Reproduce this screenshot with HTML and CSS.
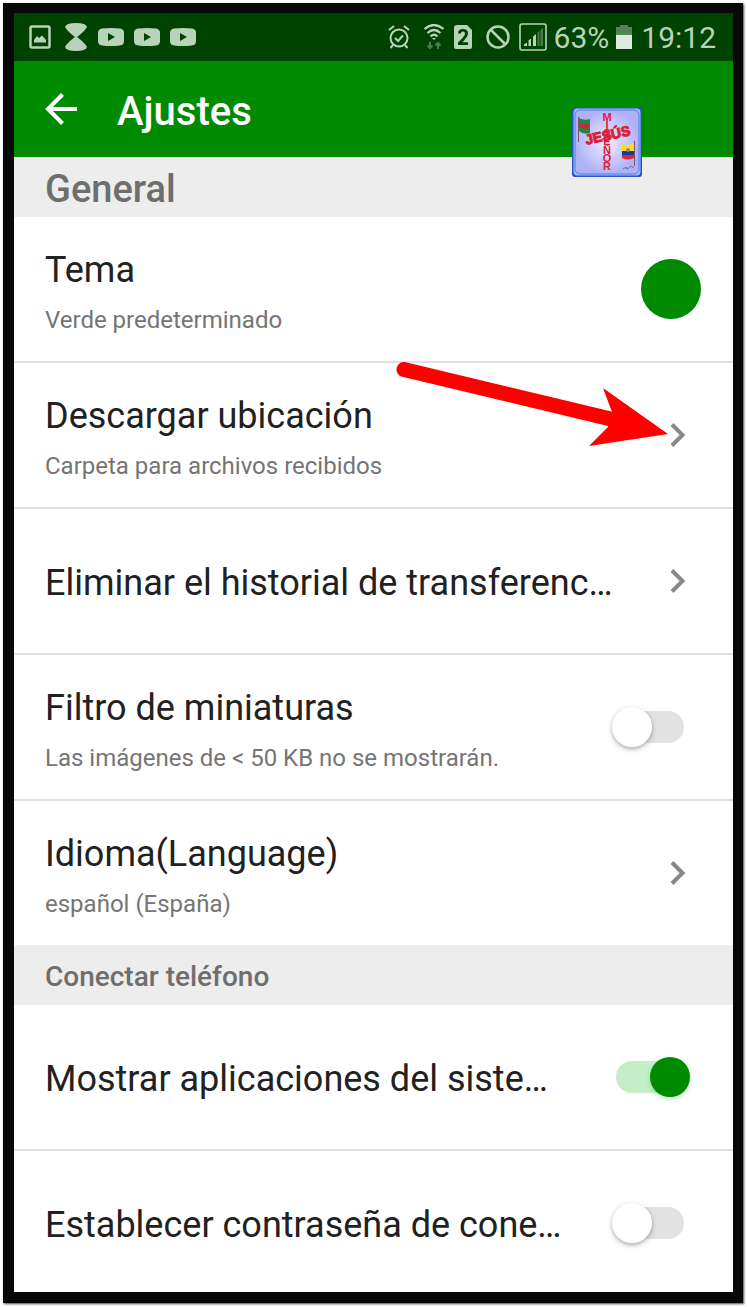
FILE: index.html
```html
<!DOCTYPE html>
<html lang="es">
<head>
<meta charset="utf-8">
<meta name="viewport" content="width=device-width, initial-scale=1">
<title>Ajustes</title>
<link rel="stylesheet" href="styles.css">
</head>
<body>
<svg class="defs" width="0" height="0" aria-hidden="true">
  <symbol id="video" viewBox="0 0 26 18">
    <path fill-rule="evenodd" d="M4 .5Q13-.5 22 .5Q26 1 26 5V13Q26 17 22 17.500Q13 18.500 4 17.500Q0 17 0 13V5Q0 1 4 .5ZM10 5V13L17 9Z"/>
  </symbol>
  <symbol id="chevron" viewBox="0 0 16 24">
    <path d="M2 1.500L12.500 12L2 22.500" fill="none" stroke="#888" stroke-width="4"/>
  </symbol>
</svg>
<div class="phone">
  <div class="status">
    <div class="notices">
      <svg width="22" height="24" viewBox="0 0 22 24"><rect x="1.500" y="1.500" width="19" height="21" rx="1.500" fill="none" stroke="currentColor" stroke-width="2.500"/><path d="M5 17.500V15L8 11L10 13L13 10.500L17 15V17.500Z"/></svg>
      <svg width="22" height="28" viewBox="0 0 22 28"><path d="M0 4Q1 0 11 0T22 4Q19 9 12 14Q19 19 22 24Q21 28 11 28T0 24Q3 19 10 14Q3 9 0 4Z"/></svg>
      <svg width="26" height="18"><use href="#video"/></svg>
      <svg width="26" height="18"><use href="#video"/></svg>
      <svg width="26" height="18"><use href="#video"/></svg>
    </div>
    <div class="system">
      <svg class="alarm" width="22" height="24" viewBox="0 0 22 24" fill="none" stroke="currentColor" stroke-width="2"><circle cx="11" cy="13" r="8.500"/><path d="M1 5L6 1M21 5L16 1M5 20L2.500 23M17 20L19.500 23M7 13L10 16L15 10.500"/></svg>
      <svg class="wifi" width="20" height="26" viewBox="0 0 20 26" fill="none" stroke="currentColor" stroke-width="2.200"><path d="M.5 5Q10-3 19.500 5M3.500 9Q10 3 16.500 9M6.500 12.500Q10 9 13.500 12.500"/><path d="M8 14L10 16L12 14Z" fill="currentColor" stroke="none"/><path d="M6 18V24M3.500 21.500L6 24L8.500 21.500M14 25V19M11.500 21.500L14 19L16.500 21.500" opacity=".4" stroke-width="2"/></svg>
      <svg class="sim" width="18" height="24" viewBox="0 0 18 24"><path fill-rule="evenodd" d="M3 0H13L18 5V22Q18 24 16 24H2Q0 24 0 22V3Q0 0 3 0ZM4 8.500H7Q7 6.500 9 6.500T11 8.500Q11 10 8 13.500L4 17.500V20H14V17.300H8.500L10.500 15Q14 11 14 8.500Q14 4 9 4T4 8.500Z"/></svg>
      <svg class="block" width="24" height="24" viewBox="0 0 24 24" fill="none" stroke="currentColor" stroke-width="2.500"><circle cx="12" cy="12" r="10.500"/><path d="M4.500 4.500L19.500 19.500"/></svg>
      <svg class="signal" width="28" height="28" viewBox="0 0 28 28"><rect x="1" y="1" width="26" height="26" rx="2" fill="none" stroke="currentColor" stroke-width="1.600"/><path d="M5 23V21.500L8 19.500V23ZM9.500 23V17.500L12 15.500V23ZM14 23V13.500L17 11V23Z"/><path d="M18.500 23V9.500L20.500 8V23ZM21.500 23V7L24 5V23Z" opacity=".4"/></svg>
      <span>63%</span>
      <svg class="battery" width="16" height="24" viewBox="0 0 16 24"><path d="M0 10V2H4V0H12V2H16V10Z" opacity=".45"/><path d="M0 10H16V24H0Z" fill="#dce9dc"/></svg>
      <span>19:12</span>
    </div>
  </div>
  <header class="bar">
    <button class="back" type="button" aria-label="Atrás"><svg width="32" height="32" viewBox="0 0 32 32" fill="none" stroke="#fff" stroke-width="4"><path d="M32 16H3M17.500 1.500L3 16L17.500 30.500"/></svg></button>
    <h1>Ajustes</h1>
    <svg class="logo" width="70" height="70" viewBox="0 0 70 70">
      <defs><radialGradient id="glow"><stop offset="0" stop-color="#f2ecff"/><stop offset="1" stop-color="#aeb2f5"/></radialGradient></defs>
      <rect width="70" height="70" rx="3" fill="#2456bd"/>
      <rect x="1.500" y="1.500" width="67" height="67" rx="4" fill="#9dbcff"/>
      <rect x="3" y="3" width="64" height="64" rx="5" fill="url(#glow)" stroke="#557be8"/>
      <path d="M6.500 10V35M62.500 34V59" stroke="#7b5968" stroke-width="1"/>
      <path d="M7 11Q12 14 18 12V26Q12 28 7 24Z" fill="#228846"/><path d="M7 16Q12 18 18 17V21Q12 23 7 20Z" fill="#c52a3f"/>
      <path d="M50 37Q56 40 62 36V44H50Z" fill="#ffdc21"/><path d="M50 44H62V48H50Z" fill="#1435b5"/><path d="M50 48H62V51Q56 54 50 51Z" fill="#df2538"/><circle cx="56" cy="43" r="2" fill="#a58c39"/>
      <path d="M51 62L54 60L55 62L59 59L62 61" fill="none" stroke="#555" stroke-width=".7"/>
      <text class="logo-text" x="35 35 35 35 35 35 35" y="14 22 30 38 47 55 63">MISEÑOR</text>
      <text class="logo-name" x="36" y="33" transform="rotate(-12 36 30)">JESÚS</text>
    </svg>
  </header>
  <main>
    <section>
      <h2 class="large">General</h2>
      <button class="row" type="button"><span class="text"><span class="title">Tema</span><span class="sub">Verde predeterminado</span></span><span class="swatch"></span></button>
      <button class="row" type="button"><span class="text"><span class="title">Descargar ubicación</span><span class="sub">Carpeta para archivos recibidos</span></span><svg class="chevron"><use href="#chevron"/></svg>
        <svg class="pointer" width="273" height="95" viewBox="0 0 273 95" fill="#f00"><path d="M9 14.500L220 65" stroke="#f00" stroke-width="15" stroke-linecap="round"/><path d="M273 79L208 33L217 57L213 72L194 91Z"/></svg>
      </button>
      <button class="row" type="button"><span class="text"><span class="title">Eliminar el historial de transferenc…</span></span><svg class="chevron"><use href="#chevron"/></svg></button>
      <label class="row"><span class="text"><span class="title">Filtro de miniaturas</span><span class="sub">Las imágenes de &lt; 50 KB no se mostrarán.</span></span><input class="switch" type="checkbox" role="switch"></label>
      <button class="row" type="button"><span class="text"><span class="title">Idioma(Language)</span><span class="sub">español (España)</span></span><svg class="chevron"><use href="#chevron"/></svg></button>
    </section>
    <section>
      <h2>Conectar teléfono</h2>
      <label class="row"><span class="text"><span class="title">Mostrar aplicaciones del siste…</span></span><input class="switch" type="checkbox" role="switch" checked></label>
      <label class="row"><span class="text"><span class="title">Establecer contraseña de cone…</span></span><input class="switch" type="checkbox" role="switch"></label>
    </section>
  </main>
</div>
</body>
</html>
```
FILE: styles.css
```css
* { box-sizing: border-box; }
body {
  margin: 0;
  padding: 3px 4px 4px 3px;
  background: #fff;
  color: #212121;
  font-family: Roboto, "Liberation Sans", sans-serif;
}
.defs { position: absolute; }
.phone {
  border: solid #080808;
  border-width: 10px 10px 11px 11px;
  background: #fff;
  box-shadow: 1px 1px 2px #444;
}
.status {
  display: flex;
  align-items: center;
  justify-content: space-between;
  height: 48px;
  padding: 0 17px 0 15px;
  background: #004200;
  color: #b9d3b9;
  fill: currentColor;
  font-size: 30px;
}
.notices { display: flex; align-items: center; gap: 10px; }
.notices svg:first-child { margin-right: 4px; }
.notices svg:nth-child(2) { margin-right: 1px; }
.system { display: flex; align-items: center; }
.alarm { margin-right: 14px; }
.wifi { margin-right: 10px; }
.sim { margin-right: 14px; }
.block { margin-right: 9px; }
.signal { margin-right: 7px; }
.battery { margin: 0 9px 0 7px; }
.bar {
  position: relative;
  display: flex;
  align-items: center;
  gap: 40px;
  height: 96px;
  padding: 0 31px;
  background: #008a00;
  color: #fff;
}
.back { display: flex; padding: 0; border: 0; background: none; }
h1, h2 { margin: 0; font-weight: 500; }
h1 { padding-top: 4px; font-size: 40px; }
.logo { position: absolute; top: 46px; right: 91px; }
.logo-text, .logo-name {
  fill: #dc2037;
  stroke: #dc2037;
  font-family: "Liberation Sans", sans-serif;
  font-weight: 700;
  text-anchor: middle;
}
.logo-text { font-size: 11px; stroke-width: 0; }
.logo-name { font-size: 14px; stroke-width: 1px; }
h2 {
  display: flex;
  align-items: center;
  height: 60px;
  padding: 2px 31px 0;
  background: #ededed;
  color: #6e6e6e;
  font-size: 28px;
}
h2.large { padding-top: 4px; font-size: 38px; }
.row {
  position: relative;
  display: flex;
  align-items: center;
  justify-content: space-between;
  width: 100%;
  min-height: 146px;
  padding: 0 42px 0 31px;
  border: 0;
  border-bottom: 2px solid #e0e0e0;
  background: none;
  color: inherit;
  font: inherit;
  text-align: left;
}
.row:last-child { min-height: 144px; border-bottom: 0; }
section:last-child .row:last-child { min-height: 141px; padding-top: 3px; }
.text { display: flex; flex-direction: column; gap: 14px; padding-top: 4px; }
.title { font-size: 36px; line-height: 44px; }
.sub { color: #757575; font-size: 24px; line-height: 28px; }
.swatch { width: 60px; height: 60px; margin-right: -10px; border-radius: 50%; background: #008a00; }
.chevron { flex: none; width: 16px; height: 24px; margin-right: 5px; }
.pointer { position: absolute; z-index: 1; top: -8px; right: 65px; }
.switch {
  appearance: none;
  display: flex;
  align-items: center;
  flex: none;
  width: 68px;
  height: 32px;
  margin: 0 7px 0 0;
  border-radius: 16px;
  background: #e2e2e2;
}
.switch::before {
  content: "";
  width: 40px;
  height: 40px;
  margin-left: -4px;
  border-radius: 50%;
  background: #fff;
  box-shadow: 0 2px 5px #0005;
}
.switch:checked { justify-content: flex-end; background: #c4efc6; }
.switch:checked::before { margin: 0 -6px 0 0; background: #008a00; box-shadow: 0 2px 5px #00a00044; }
```
